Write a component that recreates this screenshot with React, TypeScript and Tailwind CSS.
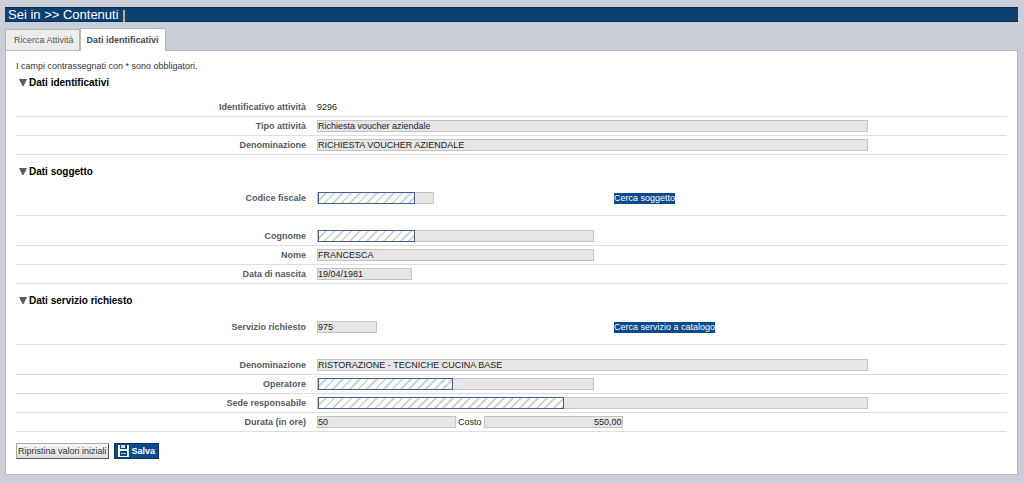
import type { ReactNode } from 'react';

const HATCH =
  'bg-[repeating-linear-gradient(135deg,#fdfefe_0px,#fdfefe_4px,#d0d5d8_4px,#d0d5d8_6px)]';

type FieldProps = {
  id: string;
  label?: string;
  width: string;
  value?: string;
  hidden?: string;
  align?: string;
};

function Field({ id, width, value = '', hidden, align = 'text-left' }: FieldProps) {
  return (
    <div className={`relative h-3 max-w-full ${width}`}>
      <input
        id={id}
        type="text"
        readOnly
        defaultValue={value}
        className={`block h-3 w-full border border-[#c3c3c3] bg-[#e6e6e6] p-0 text-[9px] leading-[10px] text-[#222222] outline-none ${align}`}
      />
      {hidden && (
        <span
          aria-hidden="true"
          className={`absolute left-px top-0 h-3 border border-[#3f6390] ${HATCH} ${hidden}`}
        />
      )}
    </div>
  );
}

type RowProps = {
  label: string;
  htmlFor?: string;
  pad?: string;
  children: ReactNode;
};

function Row({ label, htmlFor, pad = 'py-[3px]', children }: RowProps) {
  const text = 'w-[290px] shrink-0 text-right font-bold leading-3 text-[#555a60]';
  return (
    <div className={`flex items-center gap-[11px] border-b border-[#dddddd] ${pad}`}>
      {htmlFor ? (
        <label htmlFor={htmlFor} className={text}>
          {label}
        </label>
      ) : (
        <span className={text}>{label}</span>
      )}
      <div className="flex min-w-0 flex-1 items-center">{children}</div>
    </div>
  );
}

function Section({ title, children }: { title: string; children: ReactNode }) {
  return (
    <section>
      <h2 className="flex items-center gap-[2px] pl-[3px] text-[10px] font-bold leading-3 text-black">
        <svg width="8" height="8" viewBox="0 0 8 8" aria-hidden="true">
          <path d="M0 0H8L4.6 7H3.4Z" fill="#5c5c5c" />
        </svg>
        {title}
      </h2>
      {children}
    </section>
  );
}

function SearchButton({ children }: { children: ReactNode }) {
  return (
    <button type="button" className="h-[11px] bg-[#0b4a8c] leading-[11px] text-white">
      {children}
    </button>
  );
}

function DiskIcon() {
  return (
    <svg width="11" height="12" viewBox="0 0 11 12" aria-hidden="true">
      <rect width="11" height="12" fill="#f4f8fc" />
      <rect x="2" y="0" width="7" height="4" fill="#0b4a8c" />
      <rect x="3" y="0" width="4" height="3" fill="#d5e0ec" />
      <rect x="2" y="6" width="7" height="5" fill="#0b4a8c" />
      <rect x="3" y="8" width="5" height="1" fill="#9db8d4" />
    </svg>
  );
}

export default function App() {
  return (
    <div className="min-h-screen bg-[#cbced7] pb-2 pl-[5px] pr-[6px] pt-[7px] font-['Liberation_Sans',Arial,sans-serif] text-[9px] text-[#333333]">
      <header className="border-y border-[#0a2f57] bg-[#0f4170] pl-[3px] text-[13px] leading-[13px] text-white shadow-[0_1px_0_#b9d3ea]">
        Sei in &gt;&gt; Contenuti |
      </header>

      <nav className="mt-[6px] flex items-end leading-3">
        <a
          href="#ricerca"
          className="border border-b-0 border-[#b0b3ba] bg-[#ececec] py-1 pl-2 pr-[5px] text-[#555555]"
        >
          Ricerca Attività
        </a>
        <a
          href="#dati"
          aria-current="page"
          className="relative -mb-px border border-b-0 border-[#b0b3ba] bg-white px-[6px] py-[5px] font-bold text-[#44484e]"
        >
          Dati identificativi
        </a>
      </nav>

      <main className="border border-[#b5b8c2] bg-white px-[10px] pb-[15px] pt-[9px]">
        <p className="leading-3">I campi contrassegnati con * sono obbligatori.</p>

        <form className="mt-[5px]">
          <Section title="Dati identificativi">
            <div className="mt-[9px]">
              <Row label="Identificativo attività">
                <span className="leading-3 text-[#222222]">9296</span>
              </Row>
              <Row label="Tipo attività" htmlFor="tipo">
                <Field id="tipo" width="w-[551px]" value="Richiesta voucher aziendale" />
              </Row>
              <Row label="Denominazione" htmlFor="denominazione">
                <Field id="denominazione" width="w-[551px]" value="RICHIESTA VOUCHER AZIENDALE" />
              </Row>
            </div>
          </Section>

          <div className="mt-[11px]">
            <Section title="Dati soggetto">
              <Row label="Codice fiscale" htmlFor="codice" pad="pb-[11px] pt-[14px]">
                <div className="w-[297px]">
                  <Field id="codice" width="w-[117px]" hidden="w-[97px]" />
                </div>
                <SearchButton>Cerca soggetto</SearchButton>
              </Row>
              <Row label="Cognome" htmlFor="cognome" pad="pb-[3px] pt-[14px]">
                <Field id="cognome" width="w-[277px]" hidden="w-[97px]" />
              </Row>
              <Row label="Nome" htmlFor="nome">
                <Field id="nome" width="w-[277px]" value="FRANCESCA" />
              </Row>
              <Row label="Data di nascita" htmlFor="nascita">
                <Field id="nascita" width="w-[95px]" value="19/04/1981" />
              </Row>
            </Section>
          </div>

          <div className="mt-[11px]">
            <Section title="Dati servizio richiesto">
              <Row label="Servizio richiesto" htmlFor="servizio" pad="pb-[11px] pt-[14px]">
                <div className="w-[297px]">
                  <Field id="servizio" width="w-[60px]" value="975" />
                </div>
                <SearchButton>Cerca servizio a catalogo</SearchButton>
              </Row>
              <Row label="Denominazione" htmlFor="corso" pad="pb-[3px] pt-[14px]">
                <Field id="corso" width="w-[551px]" value="RISTORAZIONE - TECNICHE CUCINA BASE" />
              </Row>
              <Row label="Operatore" htmlFor="operatore">
                <Field id="operatore" width="w-[277px]" hidden="w-[135px]" />
              </Row>
              <Row label="Sede responsabile" htmlFor="sede">
                <Field id="sede" width="w-[551px]" hidden="w-[246px]" />
              </Row>
              <Row label="Durata (in ore)" htmlFor="durata">
                <Field id="durata" width="w-[139px]" value="50" />
                <label htmlFor="costo" className="px-[2px] leading-3 text-[#222222]">
                  Costo
                </label>
                <Field id="costo" width="w-[139px]" value="550,00" align="text-right" />
              </Row>
            </Section>
          </div>

          <div className="mt-[11px] flex gap-[5px]">
            <button
              type="reset"
              className="h-4 border border-b-[#555555] border-l-[#aaaaaa] border-r-[#555555] border-t-[#aaaaaa] bg-linear-to-b from-[#f6f6f6] to-[#dedede] px-px leading-3 text-[#333333]"
            >
              Ripristina valori iniziali
            </button>
            <button
              type="submit"
              className="flex h-4 items-center gap-[3px] border border-[#0a3563] bg-[#0b4a8c] px-[3px] font-bold leading-3 text-white"
            >
              <DiskIcon />
              Salva
            </button>
          </div>
        </form>
      </main>
    </div>
  );
}
